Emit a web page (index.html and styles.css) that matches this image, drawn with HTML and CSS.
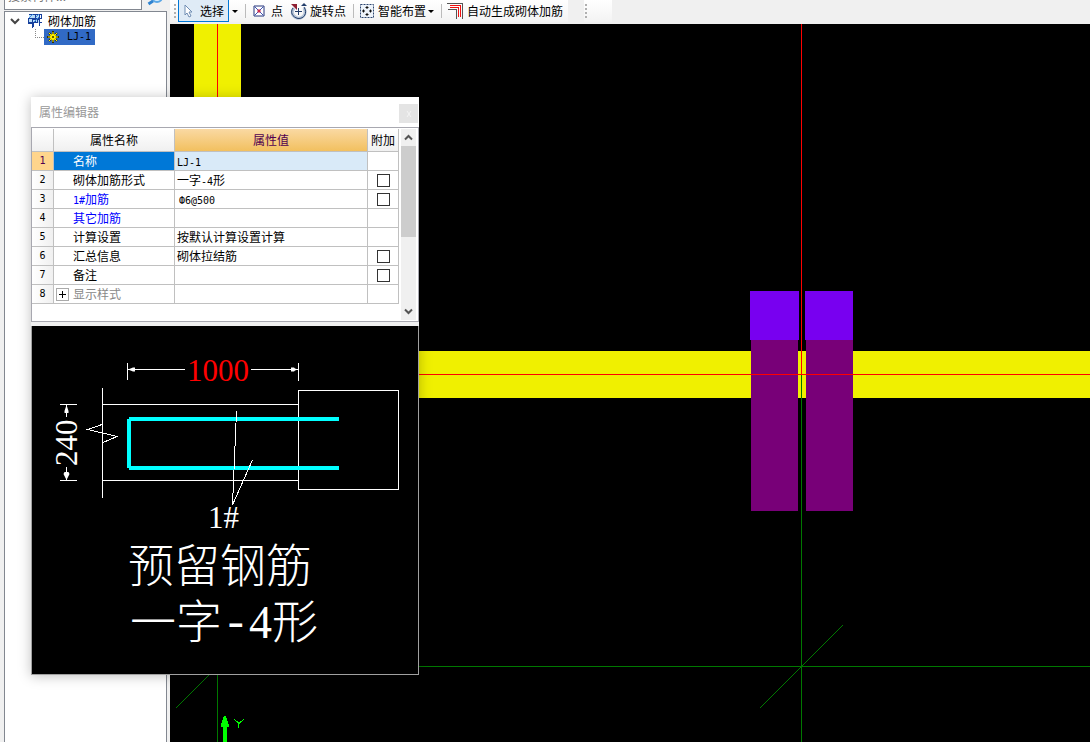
FILE: index.html
```html
<!DOCTYPE html>
<html lang="zh-CN">
<head>
<meta charset="utf-8">
<title>砌体加筋</title>
<link rel="stylesheet" href="styles.css">
</head>
<body>
<div class="app">
  <aside class="side">
    <div class="search">
      <input class="search-box" type="text" placeholder="搜索构件..." aria-label="搜索构件">
      <button class="search-btn" type="button" aria-label="搜索">
        <svg width="16" height="16" viewBox="0 0 16 16"><circle cx="10" cy="5" r="5" fill="#d8efff" stroke="#5aa7e6" stroke-width="2"/><path d="M6 9L1.500 12" stroke="#2f83d0" stroke-width="3"/></svg>
      </button>
    </div>
    <div class="tree">
      <div class="node">
        <svg class="chevron" width="10" height="10" viewBox="0 0 10 10"><path d="M1 3L5 7L9 3" fill="none" stroke="#444" stroke-width="2"/></svg>
        <svg width="16" height="16" viewBox="0 0 16 16"><path d="M2 1h10v9H2z" fill="#b8dcf8"/><g fill="none" stroke="#163f9c" shape-rendering="crispEdges"><path d="M1.500 5.500h9v4h-9zM5.500 5v10M12.500 1v12M8.500 1v9M5 5.500h10M12 9.500h3M2 1.500h12v3" stroke-width="1"/><path d="M5 6h8M1 10h6M6 14v-4" stroke-width="2"/></g><path d="M2 5l4-4M7 9l5-5M9 4l3-3" stroke="#3b8be0"/></svg>
        <span class="node-text">砌体加筋</span>
      </div>
      <div class="leaf-row">
        <span class="branch"></span>
        <button class="leaf" type="button">
          <svg width="12" height="12" viewBox="0 0 12 12"><path d="M6 0v12M0 6h12M2 2l8 8M10 2l-8 8" stroke="#332f00" stroke-width="2"/><path d="M6 1v10M1 6h10M2 2l8 8M10 2l-8 8" stroke="#ffef00" stroke-width="1"/><circle cx="6" cy="6" r="3" fill="#ffef00"/><circle cx="6" cy="6" r="1" fill="#332f00"/></svg>
          <span class="leaf-text">LJ-1</span>
        </button>
      </div>
    </div>
  </aside>

  <main class="main">
    <div class="toolbar">
      <div class="strip">
        <span class="grip"></span>
        <button class="tool active" type="button"><svg width="16" height="16" viewBox="0 0 16 16"><path d="M5 2v10l2-2 2 4 2-1-2-4h3z" fill="#fff" stroke="#6f8db3"/></svg><span>选择</span></button>
        <button class="drop" type="button" aria-label="选择方式"></button>
        <span class="sep"></span>
        <button class="tool point" type="button"><svg width="12" height="12" viewBox="0 0 12 12"><path d="M1 1h10v10H1z" fill="#fff" stroke="#25357d"/><path d="M2 2l8 8M10 2l-8 8" stroke="#3d55b5"/><path d="M4.500 4.500h3v3h-3z" fill="#c8294c"/></svg><span>点</span></button>
        <button class="tool rotate" type="button"><svg width="18" height="18" viewBox="0 0 18 18"><path d="M4 6C1 10 2 14 7 16C13 17 17 12 14 6" fill="none" stroke="#b4c4d8" stroke-width="3"/><path d="M3 6C0 10 2 15 8 16.500C14 17 18 11 14 5" fill="none" stroke="#243f6b"/><path d="M1 2h6v6z" fill="#8f2034"/><path d="M11 4h6l-3-3z" fill="#243f6b"/><path d="M8.500 6v7M5 9.500h7" stroke="#243f6b"/></svg><span>旋转点</span></button>
        <span class="sep"></span>
        <button class="tool smart" type="button"><svg width="16" height="16" viewBox="0 0 16 16"><path d="M1.500 1.500h13v13h-13z" fill="#eef4fb" stroke="#2c4670" stroke-dasharray="2 1"/><path d="M8 4v2M8 10v2M4 8h2M10 8h2" stroke="#111"/><path d="M6 5l2-2 2 2zM6 11l2 2 2-2zM5 6L3 8l2 2zM11 6l2 2-2 2z" fill="#111"/></svg><span>智能布置</span></button>
        <button class="drop near" type="button" aria-label="布置方式"></button>
        <span class="sep"></span>
        <button class="tool auto" type="button"><svg width="16" height="16" viewBox="0 0 16 16" shape-rendering="crispEdges"><path d="M0 .5h15.500V16M1 6.500h8.500V16" fill="none" stroke="#555"/><path d="M3 2.500h10.500V14M3 4.500h8.500V14" fill="none" stroke="#f01010"/></svg><span>自动生成砌体加筋</span></button>
      </div>
      <div class="strip tail"><span class="grip"></span></div>
    </div>
    <svg class="canvas" viewBox="170 24 920 718" preserveAspectRatio="xMinYMin slice" shape-rendering="crispEdges">
      <path d="M194 24h47v327h849v47H194z" fill="#f0f000"/>
      <path d="M751 340h47v171h-47zM806 340h47v171h-47z" fill="#780078"/>
      <path d="M750 291h49v49h-49zM805 291h48v49h-48z" fill="#7800f0"/>
      <path d="M217.500 24v351M217 374.500h873M801.500 24v351" fill="none" stroke="#f00"/>
      <path d="M801.500 375v367M170 666.500h920M217.500 398v344M760 708l83-83M176 708l83-83" fill="none" stroke="#007800"/>
      <path d="M223 742v-15h-2v-2l3-9h2l3 9v2h-2v15z" fill="#0f0"/>
      <path d="M234 719l5 4.500 5-4.500M238.500 723v5" fill="none" stroke="#0f0"/>
    </svg>
  </main>

  <section class="dialog" aria-label="属性编辑器">
    <header class="titlebar"><span>属性编辑器</span><button class="close" type="button" aria-label="关闭"><svg width="6" height="6" viewBox="0 0 6 6"><path d="M1 0l4 6M5 0L1 6" stroke="#f4f4f4" stroke-width="1"/></svg></button></header>
    <div class="sheet">
      <table class="grid">
        <colgroup><col class="c-num"><col class="c-name"><col><col class="c-add"></colgroup>
        <thead><tr><th></th><th>属性名称</th><th class="hot">属性值</th><th>附加</th></tr></thead>
        <tbody>
          <tr class="current"><th class="num">1</th><td class="name">名称</td><td class="val"><span class="lat">LJ-1</span></td><td></td></tr>
          <tr><th class="num">2</th><td class="name">砌体加筋形式</td><td class="val">一字<span class="lat">-4</span>形</td><td class="add"><input type="checkbox" aria-label="砌体加筋形式 附加"></td></tr>
          <tr><th class="num">3</th><td class="name blue"><span class="lat">1#</span>加筋</td><td class="val"><span class="lat bar">Ф6@500</span></td><td class="add"><input type="checkbox" aria-label="1#加筋 附加"></td></tr>
          <tr><th class="num">4</th><td class="name blue">其它加筋</td><td class="val"></td><td></td></tr>
          <tr><th class="num">5</th><td class="name">计算设置</td><td class="val">按默认计算设置计算</td><td></td></tr>
          <tr><th class="num">6</th><td class="name">汇总信息</td><td class="val">砌体拉结筋</td><td class="add"><input type="checkbox" aria-label="汇总信息 附加"></td></tr>
          <tr><th class="num">7</th><td class="name">备注</td><td class="val"></td><td class="add"><input type="checkbox" aria-label="备注 附加"></td></tr>
          <tr><th class="num">8</th><td class="name group"><div class="group-in"><button class="expand" type="button" aria-label="展开"><svg width="9" height="9" viewBox="0 0 9 9" shape-rendering="crispEdges"><path d="M1 4.500h7M4.500 1v7" stroke="#000"/></svg></button>显示样式</div></td><td class="val"></td><td></td></tr>
        </tbody>
      </table>
      <div class="scroll">
        <button class="arrow" type="button" aria-label="向上"><svg width="9" height="7" viewBox="0 0 9 7"><path d="M1 5.500L4.500 2L8 5.500" fill="none" stroke="#555" stroke-width="2"/></svg></button>
        <div class="thumb"></div>
        <button class="arrow down" type="button" aria-label="向下"><svg width="9" height="7" viewBox="0 0 9 7"><path d="M1 1.500L4.500 5L8 1.500" fill="none" stroke="#555" stroke-width="2"/></svg></button>
      </div>
    </div>
    <svg class="drawing" viewBox="32 326 386 348">
      <g fill="none" stroke="#fff" shape-rendering="crispEdges">
        <path d="M127.500 363v17M298.500 363v18M128 369.500h57M251 369.500h47"/>
        <path d="M102.500 388v110M102 404.500h196M102 480.500h196M298.500 390.500h100v99h-100z"/>
        <path d="M60 404.500h17M60 480.500h17M66.500 405v12M66.500 467v13"/>
      </g>
      <path d="M128 369.500l5-2h2v4h-2zM298 369.500l-3-1-1-1h-3v4h3l1-1zM66.500 405l-2 6v2h4v-2zM66.500 480l-3-6 1-2h4l1 2z" fill="#fff"/>
      <path d="M129 468V419M129 419h210M129 468h210" fill="none" stroke="#0ff" stroke-width="4" shape-rendering="crispEdges"/>
      <path d="M102 424.500l-14 5 29 7-14 6M236.500 411l-4 94 20-45" fill="none" stroke="#fff" shape-rendering="crispEdges"/>
      <text class="dim red" x="187" y="381">1000</text>
      <text class="dim" transform="translate(77 466) rotate(-90)">240</text>
      <text class="dim" x="208" y="528">1#</text>
      <text class="caption" x="128" y="582">预留钢筋</text>
      <text class="caption" x="130" y="638">一字<tspan class="dash" x="222">-</tspan><tspan x="249">4</tspan><tspan x="272">形</tspan></text>
    </svg>
  </section>
</div>
</body>
</html>
```
FILE: styles.css
```css
* { box-sizing: border-box; }
body {
  margin: 0;
  font: 12px/16px "Noto Sans CJK SC", sans-serif;
  color: #000;
  background: #f0f0f0;
}
button { border: 0; padding: 0; margin: 0; background: none; font: inherit; color: inherit; }
svg { display: block; flex: none; }
.app { position: relative; display: flex; height: 100vh; overflow: hidden; }

.side { flex: none; width: 167px; padding-left: 4px; display: flex; flex-direction: column; }
.search { height: 11px; flex: none; display: flex; align-items: flex-end; overflow: hidden; padding-bottom: 1px; }
.search-box {
  width: 138px;
  height: 24px;
  padding: 0 3px 5px;
  border: 1px solid #828790;
  background: #fff;
  font: inherit;
}
.search-box::placeholder { color: #777; opacity: 1; }
.search-btn { margin-left: 5px; height: 20px; }
.tree { flex: 1; background: #fff; border: 1px solid #828790; border-bottom: 0; padding: 1px 0 0 5px; }
.node { display: flex; align-items: center; height: 16px; }
.chevron { margin-right: 7px; }
.node svg + svg { margin-right: 5px; }
.node-text { line-height: 16px; }
.leaf-row { display: flex; height: 16px; padding-left: 25px; }
.branch { width: 9px; height: 9px; border-left: 1px dotted #888; border-bottom: 1px dotted #888; }
.leaf { display: flex; align-items: center; width: 51px; padding-left: 3px; background: #316ac5; gap: 8px; }
.leaf-text { font: 10px/16px "DejaVu Sans Mono", monospace; }

.main { flex: 1; min-width: 0; display: flex; flex-direction: column; padding-left: 3px; }
.toolbar { flex: none; display: flex; height: 24px; overflow: hidden; white-space: nowrap; }
.strip { display: flex; align-items: center; height: 22px; padding-left: 4px; background: linear-gradient(#fff, #f3f3f3); width: 398px; }
.strip.tail { width: 28px; margin-left: 16px; padding-left: 1px; }
.grip { width: 2px; height: 14px; margin-right: 2px; background: repeating-linear-gradient(#b0b0b0 0 2px, transparent 2px 4px); }
.tool { display: flex; align-items: center; height: 22px; flex: none; gap: 4px; }
.active { width: 51px; padding-left: 1px; border: 1px solid #0078d7; border-top: 0; background: #dfebf6; }
.drop { margin-left: 3px; border: 3px solid transparent; border-top-color: #000; border-bottom: 0; }
.near { margin-left: 2px; }
.sep { width: 1px; height: 14px; margin: 0 5px 0 7px; background: #bbb; }
.point { gap: 6px; margin-left: 2px; }
.rotate { margin-left: 7px; gap: 2px; }
.smart { gap: 3px; }
.canvas { flex: 1; min-height: 0; width: 100%; background: #000; }

.dialog {
  position: absolute;
  left: 31px;
  top: 97px;
  width: 388px;
  background: #f0f0f0;
  box-shadow: 0 1px 12px rgba(0, 0, 0, 0.25);
}
.titlebar { display: flex; align-items: center; justify-content: space-between; height: 30px; padding: 0 1px 0 8px; background: #fff; color: #999; }
.close { width: 19px; height: 19px; margin-top: 3px; background: #e4e4e4; display: flex; align-items: center; justify-content: center; }
.sheet { display: flex; justify-content: space-between; height: 195px; border: 1px solid #a8a8b0; background: #fff; padding: 1px 2px 1px 0; }
.grid { flex: 1; border-collapse: separate; border-spacing: 0; table-layout: fixed; align-self: flex-start; }
.c-num { width: 22px; }
.c-name { width: 121px; }
.c-add { width: 31px; }
.grid th, .grid td { padding: 0; height: 19px; line-height: 16px; border-right: 1px solid #c0c0c0; border-bottom: 1px solid #c0c0c0; font-weight: 400; white-space: nowrap; }
.grid thead th { height: 23px; background: linear-gradient(#fff, #f0f0f0); }
.grid thead .hot { background: linear-gradient(#fad9a3, #f2c05f); color: #500050; }
.grid .num { font: 10px/16px "DejaVu Sans Mono", monospace; background: linear-gradient(90deg, #fff, #f0f0f0); }
.grid .name { padding-left: 19px; }
.grid .val { padding-left: 2px; }
.grid .blue { color: #00f; }
.grid .current .num { background: #ffd58c; color: #500050; }
.current .name { background: #0078d7; color: #fff; }
.current .val { background: #d9eaf8; }
.lat { font-family: "DejaVu Sans Mono", monospace; font-size: 10px; line-height: 10px; }
.bar { padding-left: 2px; }
.add input { appearance: none; display: block; width: 13px; height: 13px; margin: 0 auto; border: 1px solid #333; background: #fff; }
.grid .group { padding-left: 2px; color: #888; }
.group-in { display: flex; align-items: center; gap: 4px; }
.expand { width: 13px; height: 13px; border: 1px solid #aaa; padding: 1px; }
.scroll { flex: none; width: 15px; margin-left: 2px; background: #f0f0f0; display: flex; flex-direction: column; }
.arrow { height: 17px; display: flex; align-items: center; justify-content: center; }
.thumb { height: 91px; background: #cdcdcd; }
.down { margin-top: auto; }
.drawing { width: 100%; margin-top: 4px; background: #000; border: 1px solid #a0a0a0; border-top: 0; }
.dim { font-family: "Liberation Serif", serif; font-size: 31px; fill: #fff; }
.red { fill: #f00; }
.caption { font-family: "Liberation Serif", "Noto Sans CJK SC", serif; font-weight: 300; font-size: 46px; fill: #fff; }
.dash { font-family: "Liberation Mono", monospace; }
```
